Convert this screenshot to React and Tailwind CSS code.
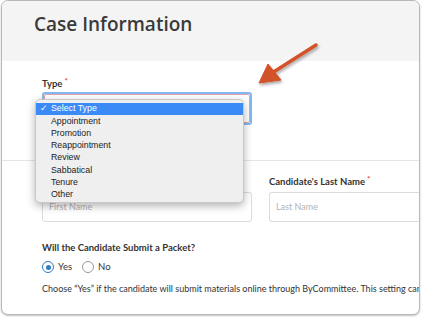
import React from "react";

const options = [
  "Appointment",
  "Promotion",
  "Reappointment",
  "Review",
  "Sabbatical",
  "Tenure",
  "Other",
];

const Radio = ({ checked, label }) => (
  <label className="flex items-center gap-[4px]">
    <span
      className={
        checked
          ? "w-[12px] h-[12px] rounded-full border-[1.5px] border-[#2f7bbf] flex items-center justify-center bg-white"
          : "w-[12px] h-[12px] rounded-full border border-[#9a9a9a] bg-white"
      }
    >
      {checked && <span className="w-[5px] h-[5px] rounded-full bg-[#2f7bbf]" />}
    </span>
    <span>{label}</span>
  </label>
);

const Arrow = () => (
  <svg className="absolute left-0 top-0 pointer-events-none" width="422" height="318">
    <defs>
      <filter id="sh" x="-20%" y="-20%" width="140%" height="140%">
        <feDropShadow dx="1" dy="2" stdDeviation="1.5" floodColor="#000" floodOpacity="0.35" />
      </filter>
    </defs>
    <g filter="url(#sh)" fill="#d2522a" stroke="#d2522a">
      <line x1="316" y1="45" x2="272" y2="73" strokeWidth="3.5" strokeLinecap="round" />
      <polygon points="259,83 268,64 281,80" strokeWidth="1" strokeLinejoin="round" />
    </g>
  </svg>
);

export default function App() {
  return (
    <div className="relative w-[422px] h-[318px] bg-white overflow-hidden font-['Lato',sans-serif] text-[#333]">
      <div className="ml-[1px] w-[419px] h-[315px] rounded-[7px] border border-[#b9b9b9] shadow-[0_1px_2px_rgba(0,0,0,0.25)] overflow-hidden bg-white">
        <div className="h-[60px] bg-[#f4f4f4] pl-[32px] pt-[11px]">
          <h1 className="text-[19px] leading-[24px] font-['Open_Sans',sans-serif] font-semibold text-[#3a3a3a]">
            Case Information
          </h1>
        </div>

        <div className="pl-[40px] pt-[17px]">
          <div className="text-[9.5px] leading-[12px] font-bold">
            Type<span className="text-[#e04848] ml-[2px] relative -top-[3px] text-[8px]">*</span>
          </div>
          <div className="mt-[2px] w-[210px] h-[33px] rounded-[3px] border-[2px] border-[#86b6f0] p-0">
            <div className="w-full h-full rounded-[2px] border border-[#e3a3ad] bg-white" />
          </div>
        </div>

        <div className="mt-[35px] border-t border-[#e6e6e6]" />

        <div className="pl-[40px] flex gap-[17px] mt-[15px]">
          <div className="w-[210px] shrink-0">
            <div className="text-[9.5px] leading-[12px] font-bold">
              Candidate's First Name<span className="text-[#e04848] ml-[2px] relative -top-[3px] text-[8px]">*</span>
            </div>
            <div className="mt-[4px] h-[30px] rounded-[3px] border border-[#dcdcdc] flex items-center pl-[6px] text-[9px] text-[#b3b3b3]">
              First Name
            </div>
          </div>
          <div className="w-[200px] shrink-0">
            <div className="text-[9.5px] leading-[12px] font-bold whitespace-nowrap">
              Candidate's Last Name<span className="text-[#e04848] ml-[2px] relative -top-[3px] text-[8px]">*</span>
            </div>
            <div className="mt-[4px] h-[30px] rounded-l-[3px] border border-r-0 border-[#dcdcdc] flex items-center pl-[6px] text-[9px] text-[#b3b3b3]">
              Last Name
            </div>
          </div>
        </div>

        <div className="pl-[40px] mt-[20px]">
          <div className="text-[9.5px] leading-[12px] font-bold">Will the Candidate Submit a Packet?</div>
          <div className="mt-[7px] flex items-center gap-[10px] text-[9.5px] leading-[12px]">
            <Radio checked label="Yes" />
            <Radio label="No" />
          </div>
          <p className="mt-[10px] text-[9px] leading-[12px] whitespace-nowrap">
            Choose “Yes” if the candidate will submit materials online through ByCommittee. This setting cannot be changed later.
          </p>
        </div>
      </div>

      <div className="absolute left-[35px] top-[99px] w-[209px] h-[104px] rounded-[5px] border border-[#c8c8c8] bg-[#efefef] shadow-[0_3px_8px_rgba(0,0,0,0.3)] pt-[3px] font-['Liberation_Sans',sans-serif] text-[8.8px] text-[#222]">
        <div className="h-[12px] bg-[#3b8bf6] text-white flex items-center">
          <span className="w-[15px] text-right pr-[3px]">✓</span>
          <span>Select Type</span>
        </div>
        {options.map((o) => (
          <div key={o} className="h-[12.3px] flex items-center pl-[15px]">
            {o}
          </div>
        ))}
      </div>

      <Arrow />
    </div>
  );
}
